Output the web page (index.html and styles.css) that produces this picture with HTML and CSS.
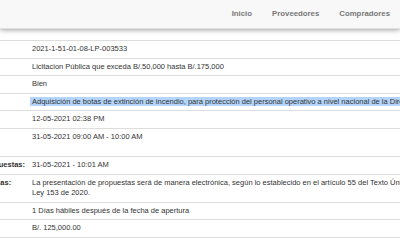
FILE: index.html
```html
<!DOCTYPE html>
<html lang="es">
<head>
<meta charset="utf-8">
<title>Detalle del acto público</title>
<link rel="stylesheet" href="styles.css">
</head>
<body>
<header class="topbar">
  <nav class="nav">
    <a class="nav-link" href="#">Inicio</a>
    <a class="nav-link" href="#">Proveedores</a>
    <a class="nav-link" href="#">Compradores</a>
  </nav>
</header>
<main class="scroller">
  <table class="detail">
    <colgroup><col class="col-label"><col class="col-value"></colgroup>
    <tbody>
      <tr><th>Número:</th><td>2021-1-51-01-08-LP-003533</td></tr>
      <tr><th>Procedimiento:</th><td>Licitacion Pública que exceda B/.50,000 hasta B/.175,000</td></tr>
      <tr><th>Objeto:</th><td>Bien</td></tr>
      <tr><th>Descripción:</th><td class="nowrap"><span class="sel">Adquisición de botas de extinción de incendio, para protección del personal operativo a nivel nacional de la Dirección General del Benemérito Cuerpo de Bomberos de la República de Panamá.</span></td></tr>
      <tr><th>Fecha de publicación:</th><td>12-05-2021 02:38 PM</td></tr>
      <tr><th>Fecha y hora de presentación de propuestas:</th><td>31-05-2021 09:00 AM - 10:00 AM</td></tr>
      <tr><th>Fecha y hora de apertura de propuestas:</th><td>31-05-2021 - 10:01 AM</td></tr>
      <tr><th>Tipo de presentación de propuestas:</th><td>La presentación de propuestas será de manera electrónica, según lo establecido en el artículo 55 del Texto Único Ley 153 de 2020.</td></tr>
      <tr><th>Plazo de subsanación:</th><td>1 Días hábiles después de la fecha de apertura</td></tr>
      <tr><th>Precio de referencia:</th><td>B/. 125,000.00</td></tr>
      <tr><th>Estado:</th><td>Vigente</td></tr>
    </tbody>
  </table>
</main>
</body>
</html>
```

FILE: styles.css
```css
html, body {
  margin: 0;
  padding: 0;
  background: #fff;
  overflow: hidden;
  font-family: "Liberation Sans", Arial, sans-serif;
  color: #333;
}

.topbar {
  height: 28px;
  background: #f8f8f8;
  border-bottom: 1px solid #e0e0e0;
  box-shadow: 0 1px 5px rgba(0, 0, 0, 0.38);
  display: flex;
  justify-content: flex-end;
  align-items: center;
  position: relative;
}

.nav {
  display: flex;
  align-items: center;
}

.nav-link {
  font-size: 7.8px;
  font-weight: bold;
  color: #777;
  text-decoration: none;
  padding: 0 10px;
  line-height: 28px;
}

.scroller {
  margin-top: 11px;
  margin-left: -120px;
  width: 540px;
}

.detail {
  border-collapse: collapse;
  table-layout: fixed;
  width: 533px;
  font-size: 7.5px;
  line-height: 10.5px;
}

.col-label { width: 148px; }
.col-value { width: 385px; }

.detail th,
.detail td {
  border-top: 1px solid #ddd;
  padding: 3.05px 3px 3.05px 4px;
  vertical-align: top;
  text-align: left;
}

.detail th {
  font-weight: bold;
  color: #333;
  padding-left: 0;
  padding-right: 2px;
}

.nowrap {
  white-space: nowrap;
  overflow: hidden;
}

.sel {
  background: #b4d5fb;
  padding-left: 2px;
  margin-left: -2px;
}
```
